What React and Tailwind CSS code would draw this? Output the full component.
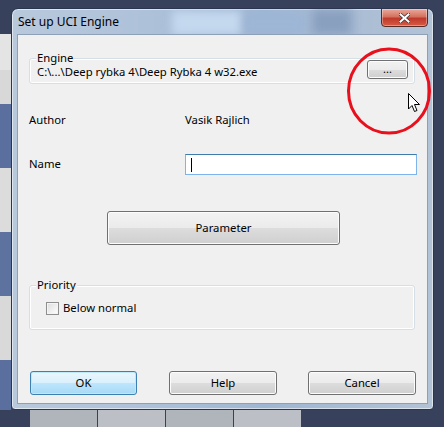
import React from "react";

const btn =
  "flex items-center justify-center rounded-[3px] border border-[#707070] bg-[linear-gradient(#f2f2f2_0%,#ebebeb_50%,#dddddd_50%,#cfcfcf_100%)] text-black shadow-[inset_0_0_0_1px_#fcfcfc]";

const Cursor = () => (
  <svg width="12" height="20" viewBox="0 0 12 20" className="absolute left-[390px] top-[58px]">
    <path d="M0.5 0.5 L0.5 16 L4 12.5 L6.5 18.5 L9 17.5 L6.5 11.5 L11.5 11.5 Z" fill="#fff" stroke="#000" strokeWidth="1" strokeLinejoin="miter" />
  </svg>
);

const GroupBox = ({ label, className, children }) => (
  <div className={"relative rounded-[3px] border border-[#d5dfe5] shadow-[inset_0_0_0_1px_#fff] " + className}>
    <span className="absolute left-[6px] top-[-7px] bg-[#f0f0f0] px-[1px] leading-[12px]">{label}</span>
    {children}
  </div>
);

export default function App() {
  return (
    <div className="relative h-[427px] w-[444px] overflow-hidden bg-[#37415c] font-['Noto_Sans','Open_Sans',sans-serif] text-[11.3px] text-black">
      {/* desktop behind */}
      <div className="absolute left-0 top-[34px] flex h-[376px] w-[11px] flex-col">
        <div className="h-[36px] bg-[#e4e4e4]" />
        <div className="h-[34px] bg-[#d8d8d8]" />
        <div className="h-[64px] bg-[#5b6f9e]" />
        <div className="h-[64px] bg-[#dcdcdc]" />
        <div className="h-[64px] bg-[#5e72a0]" />
        <div className="h-[64px] bg-[#d9d9d9]" />
        <div className="flex-1 bg-[#5b6f9e]" />
      </div>
      <div className="absolute left-[30px] top-[410px] flex h-[17px] gap-[1px]">
        <div className="w-[67px] bg-[#b0b4bb]" />
        <div className="w-[67px] bg-[#bcbfc5]" />
        <div className="w-[67px] bg-[#b0b4bb]" />
        <div className="w-[67px] bg-[#bcbfc5]" />
      </div>

      {/* window */}
      <div className="absolute left-[11px] top-[8px] flex h-[402px] w-[423px] flex-col rounded-t-[7px] rounded-b-[4px] border border-[#2a3550] bg-[linear-gradient(90deg,#b9c9dc_0%,#aabfd8_40%,#9fb6d2_60%,#b3c3d6_100%)] shadow-[inset_0_0_0_1px_rgba(255,255,255,0.55)]">
        {/* title bar */}
        <div className="relative flex h-[25px] shrink-0 items-center overflow-hidden rounded-t-[6px] pl-[6px]">
          <div className="absolute left-[160px] top-[2px] h-[24px] w-[70px] bg-[#c4d8ee] blur-[4px]" />
          <div className="absolute left-[232px] top-[4px] h-[22px] w-[60px] bg-[#9db6d6] blur-[4px]" />
          <div className="absolute left-[300px] top-[0px] h-[26px] w-[40px] bg-[#8aa0bf] blur-[5px]" />
          <span className="relative text-[12px] leading-[14px] text-black">Set up UCI Engine</span>
          <div className="absolute right-[5px] top-[-1px] flex h-[19px] w-[47px] items-center justify-center rounded-b-[4px] border border-[#5a2a25] bg-[linear-gradient(#e9a99b_0%,#d4735f_45%,#c0392b_55%,#d65b43_100%)] shadow-[inset_0_0_0_1px_rgba(255,255,255,0.35)]">
            <svg width="11" height="10" viewBox="0 0 11 10">
              <path d="M1.5 1.5 L9.5 8.5 M9.5 1.5 L1.5 8.5" stroke="#3b3b3b" strokeWidth="3.6" strokeLinecap="square" />
              <path d="M1.5 1.5 L9.5 8.5 M9.5 1.5 L1.5 8.5" stroke="#ffffff" strokeWidth="2" strokeLinecap="square" />
            </svg>
          </div>
        </div>

        {/* client area */}
        <div className="relative mx-[5px] mb-[5px] flex flex-1 flex-col border border-[#8da0b8] bg-[#f0f0f0]">
          <GroupBox label="Engine" className="ml-[11px] mr-[12px] mt-[23px] h-[26px]">
            <div className="flex h-full items-center justify-between pl-[7px] pr-[6px] pt-[2px]">
              <span className="leading-[12px]">C:\...\Deep rybka 4\Deep Rybka 4 w32.exe</span>
              <div className={btn + " mt-[-5px] h-[19px] w-[41px] text-[11px] leading-none"}>
                <span className="mt-[-3px]">...</span>
              </div>
            </div>
          </GroupBox>

          <div className="ml-[11px] mt-[27px] flex h-[18px] items-center">
            <span className="w-[156px]">Author</span>
            <span>Vasik Rajlich</span>
          </div>

          <div className="ml-[11px] mt-[25px] flex h-[21px] items-center">
            <span className="w-[156px]">Name</span>
            <div className="flex h-[21px] w-[232px] items-center border border-[#7eb4ea] border-t-[#3d7bad] bg-white pl-[5px]">
              <div className="h-[14px] w-[1px] bg-black" />
            </div>
          </div>

          <div className={btn + " ml-[89px] mt-[36px] h-[34px] w-[233px]"}>Parameter</div>

          <GroupBox label="Priority" className="ml-[11px] mr-[12px] mt-[40px] h-[45px]">
            <div className="ml-[16px] mt-[15px] flex items-center gap-[4px]">
              <div className="h-[13px] w-[13px] border border-[#8e8f8f] bg-[linear-gradient(135deg,#dcdcdc,#ffffff)] shadow-[inset_0_0_0_1px_#f4f4f4]" />
              <span className="leading-[14px]">Below normal</span>
            </div>
          </GroupBox>

          <div className="ml-[12px] mt-[41px] flex h-[24px] gap-[32px]">
            <div className="flex h-[24px] w-[107px] items-center justify-center rounded-[3px] border border-[#3c7fb1] bg-[linear-gradient(#eaf6fd_0%,#d9f0fc_50%,#bee6fd_50%,#a7d9f5_100%)] shadow-[inset_0_0_0_1px_#c0e8fb]">OK</div>
            <div className={btn + " h-[24px] w-[108px]"}>Help</div>
            <div className={btn + " ml-[-1px] h-[24px] w-[108px]"}>Cancel</div>
          </div>

          {/* annotation */}
          <svg width="90" height="92" viewBox="0 0 90 92" className="absolute left-[326px] top-[10px]">
            <ellipse cx="45" cy="46" rx="40.5" ry="42" fill="none" stroke="#e8101c" strokeWidth="3" />
          </svg>
          <Cursor />
        </div>
      </div>
    </div>
  );
}
